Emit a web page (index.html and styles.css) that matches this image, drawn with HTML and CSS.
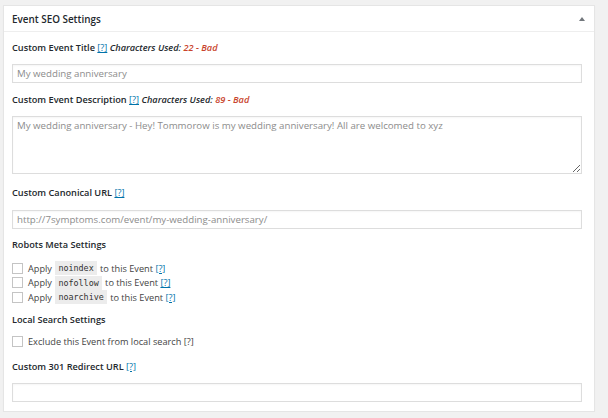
FILE: index.html
```html
<!DOCTYPE html>
<html>
<head>
<meta charset="utf-8">
<link rel="stylesheet" href="styles.css">
</head>
<body>
<div class="panel">
  <div class="panel-head">
    <span class="panel-title">Event SEO Settings</span>
    <span class="toggle"></span>
  </div>
  <div class="panel-body">
    <div class="label l1">Custom Event Title <a class="help" href="#">[?]</a> <em class="used">Characters Used: <span class="bad">22 - Bad</span></em></div>
    <input class="field f1" type="text" value="My wedding anniversary">
    <div class="label l2">Custom Event Description <a class="help" href="#">[?]</a> <em class="used">Characters Used: <span class="bad">89 - Bad</span></em></div>
    <textarea class="area">My wedding anniversary - Hey! Tommorow is my wedding anniversary! All are welcomed to xyz</textarea>
    <div class="label l3">Custom Canonical URL <a class="help" href="#">[?]</a></div>
    <input class="field f2" type="text" value="http://7symptoms.com/event/my-wedding-anniversary/">
    <div class="label l4">Robots Meta Settings</div>
    <div class="checks">
      <div class="check"><span class="box"></span>Apply <code>noindex</code> to this Event <a class="help" href="#">[?]</a></div>
      <div class="check"><span class="box"></span>Apply <code>nofollow</code> to this Event <a class="help" href="#">[?]</a></div>
      <div class="check"><span class="box"></span>Apply <code>noarchive</code> to this Event <a class="help" href="#">[?]</a></div>
    </div>
    <div class="label l5">Local Search Settings</div>
    <div class="check solo"><span class="box"></span>Exclude this Event from local search [?]</div>
    <div class="label l6">Custom 301 Redirect URL <a class="help" href="#">[?]</a></div>
    <input class="field f3" type="text" value="">
  </div>
</div>
</body>
</html>
```
FILE: styles.css
```css
html, body {
  margin: 0;
  padding: 0;
  background: #f1f1f1;
}
body {
  padding: 5px 13px 0 3px;
  font-family: "Open Sans", "Liberation Sans", sans-serif;
  font-size: 9.2px;
  color: #32373c;
}
.panel {
  background: #fff;
  border: 1px solid #e5e5e5;
  box-shadow: 0 1px 1px rgba(0,0,0,0.04);
}
.panel-head {
  height: 25px;
  border-bottom: 1px solid #eeeeee;
  display: flex;
  align-items: center;
  justify-content: space-between;
  padding: 0 9px 0 8px;
}
.panel-title {
  font-size: 9.9px;
  font-weight: 600;
  color: #23282d;
}
.toggle {
  width: 0;
  height: 0;
  border-left: 3px solid transparent;
  border-right: 3px solid transparent;
  border-bottom: 4px solid #72777c;
  margin-top: 1px;
}
.panel-body {
  padding: 0 12px 9px 8px;
}
.label {
  line-height: 14px;
  height: 14px;
  font-weight: 600;
  color: #23282d;
  white-space: nowrap;
}
.l1 { margin-top: 9px; }
.l2 { margin-top: 10px; }
.l3 { margin-top: 12px; }
.l4 { margin-top: 9px; }
.l5 { margin-top: 8px; }
.l6 { margin-top: 11px; }
.help {
  color: #0073aa;
  font-weight: 400;
  text-decoration: underline;
}
.used {
  font-weight: 600;
  font-style: italic;
  color: #23282d;
}
.bad {
  color: #c9442c;
}
.field {
  display: block;
  box-sizing: border-box;
  width: 100%;
  height: 19px;
  margin: 9px 0 0 0;
  padding: 0 4px;
  border: 1px solid #dddddd;
  box-shadow: inset 0 1px 2px rgba(0,0,0,0.04);
  font-family: "Open Sans", "Liberation Sans", sans-serif;
  font-size: 9.7px;
  color: #8c8c8c;
  background: #fff;
  outline: none;
}
.f2 { margin-top: 10px; }
.area {
  display: block;
  box-sizing: border-box;
  width: 100%;
  height: 58px;
  margin: 9px 0 0 0;
  padding: 2px 4px;
  border: 1px solid #dddddd;
  box-shadow: inset 0 1px 2px rgba(0,0,0,0.04);
  font-family: "Open Sans", "Liberation Sans", sans-serif;
  font-size: 9.7px;
  line-height: 14px;
  color: #8c8c8c;
  resize: vertical;
  outline: none;
}
.checks {
  margin-top: 9px;
}
.check {
  display: flex;
  align-items: center;
  height: 14.5px;
  color: #444;
  white-space: pre;
}
.check.solo {
  margin-top: 8px;
  height: 14px;
}
.box {
  box-sizing: border-box;
  width: 11px;
  height: 11px;
  border: 1px solid #c4c4c4;
  background: #fff;
  margin-right: 5px;
  flex: none;
}
code {
  font-family: "DejaVu Sans Mono", "Liberation Mono", monospace;
  font-size: 8.4px;
  background: #ececec;
  color: #333;
  padding: 0 3px;
  line-height: 14px;
  margin: 0 1px;
}
```
